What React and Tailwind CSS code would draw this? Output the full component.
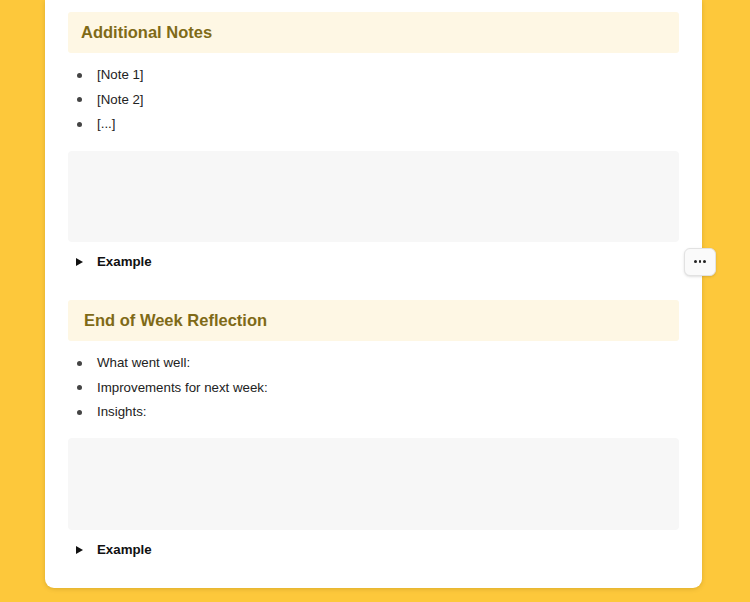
import React from "react";

function Heading({ children, pl }) {
  return (
    <div className={"h-[41px] flex items-center rounded-[3px] bg-[#fef7e4] pr-[13px] " + (pl ? "pl-[16px]" : "pl-[13px]")}>
      <span className="text-[16.5px] font-bold text-[#7f6a17]">{children}</span>
    </div>
  );
}

function Bullets({ items }) {
  return (
    <ul className="mt-[10px] flex flex-col">
      {items.map((t, i) => (
        <li key={i} className="h-[24.5px] flex items-center text-[13.3px] text-[#222]">
          <span className="w-[29px] flex justify-start pl-[9px]">
            <span className="block w-[5px] h-[5px] rounded-full bg-[#444]" />
          </span>
          {t}
        </li>
      ))}
    </ul>
  );
}

function Toggle({ more }) {
  return (
    <div className="relative mt-[8.5px] h-[22px] flex items-center">
      <span className="w-[29px] pl-[8px] flex">
        <svg width="7" height="8" viewBox="0 0 7 8"><path d="M0 0 L7 4 L0 8 Z" fill="#111" /></svg>
      </span>
      <span className="text-[13.3px] font-bold text-[#111]">Example</span>
      {more && (
        <div className="absolute left-[616px] top-[-3px] w-[32px] h-[28px] rounded-[6px] border border-[#e2e2e2] bg-[#fafafa] shadow-sm flex items-center justify-center gap-[2px]">
          <span className="w-[2.5px] h-[2.5px] rounded-full bg-[#222]" />
          <span className="w-[2.5px] h-[2.5px] rounded-full bg-[#222]" />
          <span className="w-[2.5px] h-[2.5px] rounded-full bg-[#222]" />
        </div>
      )}
    </div>
  );
}

export default function App() {
  return (
    <div className="w-[750px] h-[602px] overflow-hidden bg-[#fdc83b]" style={{ fontFamily: '"Liberation Sans", Arial, sans-serif' }}>
      <div className="ml-[45px] w-[657px] h-[588px] bg-white rounded-b-[9px] shadow-[0_1px_4px_rgba(120,90,0,0.25)] px-[23px] pt-[12px]">
        <Heading>Additional Notes</Heading>
        <Bullets items={["[Note 1]", "[Note 2]", "[...]"]} />
        <div className="mt-[14.5px] h-[91px] rounded-[4px] bg-[#f7f7f7]" />
        <Toggle more />
        <div className="mt-[27.5px]">
          <Heading pl>End of Week Reflection</Heading>
        </div>
        <Bullets items={["What went well:", "Improvements for next week:", "Insights:"]} />
        <div className="mt-[13.5px] h-[92px] rounded-[4px] bg-[#f7f7f7]" />
        <Toggle />
      </div>
    </div>
  );
}
